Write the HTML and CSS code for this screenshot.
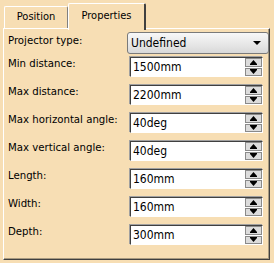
FILE: index.html
```html
<!DOCTYPE html>
<html lang="en">
<head>
    <meta charset="UTF-8">
    <title>Projector Properties</title>
    <link rel="stylesheet" href="styles.css">
</head>
<body>
    <div class="tabs">
        <div class="tab">Position</div>
        <div class="tab active">Properties</div>
    </div>

    <div class="panel">
        <div class="row first">
            <label>Projector type:</label>
            <div class="combo">
                <span>Undefined</span>
                <span class="arrow"></span>
            </div>
        </div>
        <div class="row">
            <label>Min distance:</label>
            <div class="spin"><span class="value">1500mm</span><span class="buttons"><i><svg width="7" height="5" viewBox="0 0 7 5"><path d="M3.5 0L7 4H0z"/><rect y="4" width="7" height="1"/></svg></i><i><svg width="7" height="5" viewBox="0 0 7 5"><rect width="7" height="1"/><path d="M0 1H7L3.5 5z"/></svg></i></span></div>
        </div>
        <div class="row">
            <label>Max distance:</label>
            <div class="spin"><span class="value">2200mm</span><span class="buttons"><i><svg width="7" height="5" viewBox="0 0 7 5"><path d="M3.5 0L7 4H0z"/><rect y="4" width="7" height="1"/></svg></i><i><svg width="7" height="5" viewBox="0 0 7 5"><rect width="7" height="1"/><path d="M0 1H7L3.5 5z"/></svg></i></span></div>
        </div>
        <div class="row">
            <label>Max horizontal angle:</label>
            <div class="spin"><span class="value">40deg</span><span class="buttons"><i><svg width="7" height="5" viewBox="0 0 7 5"><path d="M3.5 0L7 4H0z"/><rect y="4" width="7" height="1"/></svg></i><i><svg width="7" height="5" viewBox="0 0 7 5"><rect width="7" height="1"/><path d="M0 1H7L3.5 5z"/></svg></i></span></div>
        </div>
        <div class="row">
            <label>Max vertical angle:</label>
            <div class="spin"><span class="value">40deg</span><span class="buttons"><i><svg width="7" height="5" viewBox="0 0 7 5"><path d="M3.5 0L7 4H0z"/><rect y="4" width="7" height="1"/></svg></i><i><svg width="7" height="5" viewBox="0 0 7 5"><rect width="7" height="1"/><path d="M0 1H7L3.5 5z"/></svg></i></span></div>
        </div>
        <div class="row">
            <label>Length:</label>
            <div class="spin"><span class="value">160mm</span><span class="buttons"><i><svg width="7" height="5" viewBox="0 0 7 5"><path d="M3.5 0L7 4H0z"/><rect y="4" width="7" height="1"/></svg></i><i><svg width="7" height="5" viewBox="0 0 7 5"><rect width="7" height="1"/><path d="M0 1H7L3.5 5z"/></svg></i></span></div>
        </div>
        <div class="row">
            <label>Width:</label>
            <div class="spin"><span class="value">160mm</span><span class="buttons"><i><svg width="7" height="5" viewBox="0 0 7 5"><path d="M3.5 0L7 4H0z"/><rect y="4" width="7" height="1"/></svg></i><i><svg width="7" height="5" viewBox="0 0 7 5"><rect width="7" height="1"/><path d="M0 1H7L3.5 5z"/></svg></i></span></div>
        </div>
        <div class="row">
            <label>Depth:</label>
            <div class="spin"><span class="value">300mm</span><span class="buttons"><i><svg width="7" height="5" viewBox="0 0 7 5"><path d="M3.5 0L7 4H0z"/><rect y="4" width="7" height="1"/></svg></i><i><svg width="7" height="5" viewBox="0 0 7 5"><rect width="7" height="1"/><path d="M0 1H7L3.5 5z"/></svg></i></span></div>
        </div>
    </div>
</body>
</html>
```

FILE: styles.css
```css
* { margin: 0; padding: 0; box-sizing: border-box; }
body { font-family: 'DejaVu Sans Condensed', 'DejaVu Sans', sans-serif; font-size: 11px; color: #000; background: #f7deb4; width: 274px; height: 263px; overflow: hidden; }

.tabs { display: flex; align-items: flex-end; height: 29px; padding-left: 4px; position: relative; z-index: 1; }
.tab { width: 64px; height: 22px; line-height: 20px; text-align: center; border-top: 1px solid #fff; border-left: 1px solid #fff; border-right: 1px solid #808080; border-radius: 2px 2px 0 0; margin-bottom: 1px; }
.tab.active { width: 78px; height: 27px; line-height: 24px; margin-bottom: -1px; background: #f7deb4; border-right: 2px solid #404040; }

.panel { margin: -1px 0 0 3px; width: 267px; height: 232px; border-top: 1px solid #fff; border-left: 1px solid #fff; border-right: 1px solid #404040; border-bottom: 1px solid #404040; box-shadow: inset -1px -1px 0 #a89a80; padding: 3px 0 0 4px; }

.row { display: grid; grid-template-columns: 116px 137px; height: 28px; align-items: start; }
.row.first { height: 25px; }
.row label { line-height: 13px; font-size: 11.3px; }
.row.first label { padding-top: 2px; }

.combo { height: 22px; width: 142px; margin-left: 3px; border: 1px solid #7a7a7a; border-radius: 3px; background: linear-gradient(#f8f8f8, #e6e6e6 60%, #d8d8d8); display: flex; align-items: center; justify-content: space-between; padding: 0 7px 0 3px; font-size: 12px; }
.arrow { width: 0; height: 0; border-left: 4px solid transparent; border-right: 4px solid transparent; border-top: 4px solid #000; }

.spin { height: 20px; width: 133px; margin-left: 6px; display: flex; background: #fff; border-top: 1px solid #404040; border-left: 1px solid #404040; border-right: 1px solid #fff; border-bottom: 1px solid #fff; box-shadow: -1px -1px 0 #a0a0a0; }
.value { flex: 1; padding-left: 2px; line-height: 18px; font-size: 12px; }
.buttons { width: 17px; display: flex; flex-direction: column; gap: 1px; background: #fff; }
.buttons i { flex: 1; background: #dcdcdc; border: 1px solid #8a8a8a; display: flex; align-items: center; justify-content: center; }
.buttons svg { display: block; fill: #000; }
```
